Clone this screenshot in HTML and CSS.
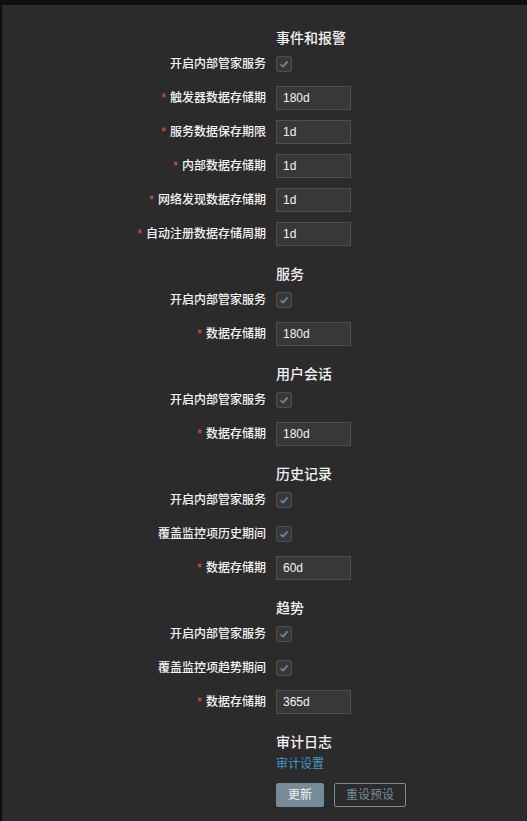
FILE: index.html
```html
<!DOCTYPE html>
<html lang="zh-CN">
<head>
<meta charset="utf-8">
<title>内部管家服务</title>
<link rel="stylesheet" href="styles.css">
</head>
<body>
<main class="panel">
  <form class="form">
    <section class="section first">
      <h3 class="heading">事件和报警</h3>
      <div class="row"><label class="label">开启内部管家服务</label><span class="check"><svg viewBox="0 0 16 16"><polyline points="4,8.5 7,11 12,5"/></svg></span></div>
      <div class="row"><label class="label req">触发器数据存储期</label><input class="input" value="180d"></div>
      <div class="row"><label class="label req">服务数据保存期限</label><input class="input" value="1d"></div>
      <div class="row"><label class="label req">内部数据存储期</label><input class="input" value="1d"></div>
      <div class="row"><label class="label req">网络发现数据存储期</label><input class="input" value="1d"></div>
      <div class="row"><label class="label req">自动注册数据存储周期</label><input class="input" value="1d"></div>
    </section>
    <section class="section">
      <h3 class="heading">服务</h3>
      <div class="row"><label class="label">开启内部管家服务</label><span class="check"><svg viewBox="0 0 16 16"><polyline points="4,8.5 7,11 12,5"/></svg></span></div>
      <div class="row"><label class="label req">数据存储期</label><input class="input" value="180d"></div>
    </section>
    <section class="section">
      <h3 class="heading">用户会话</h3>
      <div class="row"><label class="label">开启内部管家服务</label><span class="check"><svg viewBox="0 0 16 16"><polyline points="4,8.5 7,11 12,5"/></svg></span></div>
      <div class="row"><label class="label req">数据存储期</label><input class="input" value="180d"></div>
    </section>
    <section class="section">
      <h3 class="heading">历史记录</h3>
      <div class="row"><label class="label">开启内部管家服务</label><span class="check"><svg viewBox="0 0 16 16"><polyline points="4,8.5 7,11 12,5"/></svg></span></div>
      <div class="row"><label class="label">覆盖监控项历史期间</label><span class="check"><svg viewBox="0 0 16 16"><polyline points="4,8.5 7,11 12,5"/></svg></span></div>
      <div class="row"><label class="label req">数据存储期</label><input class="input" value="60d"></div>
    </section>
    <section class="section">
      <h3 class="heading">趋势</h3>
      <div class="row"><label class="label">开启内部管家服务</label><span class="check"><svg viewBox="0 0 16 16"><polyline points="4,8.5 7,11 12,5"/></svg></span></div>
      <div class="row"><label class="label">覆盖监控项趋势期间</label><span class="check"><svg viewBox="0 0 16 16"><polyline points="4,8.5 7,11 12,5"/></svg></span></div>
      <div class="row"><label class="label req">数据存储期</label><input class="input" value="365d"></div>
    </section>
    <section class="section">
      <h3 class="heading">审计日志</h3>
      <div class="linkrow"><a class="link" href="#">审计设置</a></div>
      <div class="buttons">
        <button type="button" class="btn primary">更新</button>
        <button type="button" class="btn alt">重设预设</button>
      </div>
    </section>
  </form>
</main>
</body>
</html>
```

FILE: styles.css
```css
html, body {
  margin: 0;
  padding: 0;
}
body {
  background: #0e0f10;
  font-family: "Liberation Sans", Arial, "Noto Sans CJK SC", sans-serif;
  font-size: 12px;
  color: #f2f2f2;
}
.panel {
  margin: 5px 0 0 2px;
  min-height: calc(100vh - 5px);
  background: #2b2b2b;
  box-sizing: border-box;
  padding-top: 5px;
}
.form {
  margin: 0;
}
.section {
  display: flex;
  flex-direction: column;
  padding-left: 274px;
}
.heading {
  margin: 19px 0 5px 0;
  font-size: 14px;
  line-height: 18px;
  font-weight: 500;
  color: #f2f2f2;
}
.row {
  display: flex;
  align-items: center;
  height: 24px;
  margin-left: -274px;
  margin-bottom: 10px;
}
.section .row:last-of-type {
  margin-bottom: 0;
}
.label {
  width: 264px;
  flex: none;
  text-align: right;
  margin-right: 10px;
  line-height: 16px;
  font-weight: 500;
  color: #f4f4f4;
}
.label.req::before {
  content: "*";
  color: #e45959;
  margin-right: 4px;
}
.input {
  box-sizing: border-box;
  width: 75px;
  height: 24px;
  margin: 0;
  padding: 0 6px;
  background: #383838;
  border: 1px solid #4f4f4f;
  color: #f4f4f4;
  font-family: "Liberation Sans", Arial, sans-serif;
  font-size: 12px;
  outline: none;
}
.check {
  box-sizing: border-box;
  width: 16px;
  height: 16px;
  background: #383838;
  border: 1px solid #4f4f4f;
  border-radius: 2px;
  display: flex;
  align-items: center;
  justify-content: center;
}
.check svg {
  width: 14px;
  height: 14px;
}
.check polyline {
  fill: none;
  stroke: #6a8a9c;
  stroke-width: 2;
}
.linkrow {
  height: 16px;
  line-height: 16px;
}
.link {
  color: #4796c4;
  text-decoration: none;
  font-size: 12px;
}
.buttons {
  display: flex;
  gap: 10px;
  margin-top: 11px;
}
.btn {
  box-sizing: border-box;
  height: 24px;
  padding: 0 11px;
  border-radius: 2px;
  font-family: "Liberation Sans", Arial, "Noto Sans CJK SC", sans-serif;
  font-size: 12px;
  line-height: 22px;
  cursor: pointer;
}
.btn.primary {
  width: 48px;
  background: #768d99;
  border: 1px solid #768d99;
  color: #f2f2f2;
}
.btn.alt {
  width: 72px;
  background: transparent;
  border: 1px solid #768d99;
  color: #768d99;
}
```
